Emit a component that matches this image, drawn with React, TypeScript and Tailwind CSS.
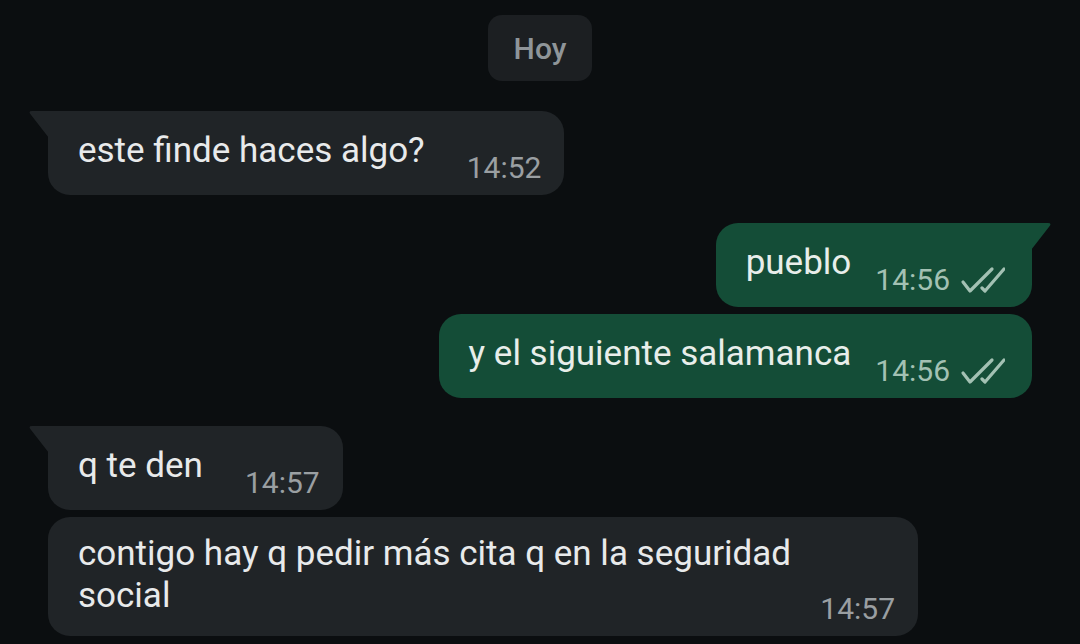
import React from "react"

const font = { fontFamily: "Roboto, 'Noto Sans', sans-serif" }

function InTail() {
  return (
    <svg className="absolute left-[-20px] top-0" width="20" height="27" viewBox="0 0 20 27">
      <path d="M21 0 H4 Q0 0 2.5 3.2 L21 27 Z" fill="#202427" />
    </svg>
  )
}

function OutTail() {
  return (
    <svg className="absolute right-[-20px] top-0" width="20" height="27" viewBox="0 0 20 27">
      <path d="M-1 0 H16 Q20 0 17.5 3.2 L-1 27 Z" fill="#144d37" />
    </svg>
  )
}

function Ticks() {
  return (
    <svg width="46" height="32" viewBox="0 0 46 32" fill="none" stroke="#a3c1b3" strokeWidth="3.2" strokeLinecap="round" strokeLinejoin="round">
      <path d="M4 18 L11 27 L33 5" />
      <path d="M23 24 L26 27 L45 5" />
    </svg>
  )
}

function Incoming({ text, time, tail }: { text: string; time: string; tail?: boolean }) {
  return (
    <div className="flex pl-[48px]">
      <div className={`relative flex items-end bg-[#202427] rounded-[22px] pl-[30px] pr-[23px] pt-[19px] pb-[10px] ${tail ? "rounded-tl-none" : ""}`}>
        {tail && <InTail />}
        <span className="text-[35px] leading-[42px] text-[#e8eaeb] mb-[13px] mr-[42px]">{text}</span>
        <span className="text-[30px] leading-[35px] text-[#9a9fa2]">{time}</span>
      </div>
    </div>
  )
}

function Outgoing({ text, time, tail }: { text: string; time: string; tail?: boolean }) {
  return (
    <div className="flex justify-end pr-[48px]">
      <div className={`relative flex items-end bg-[#144d37] rounded-[22px] pl-[30px] pr-[27px] pt-[19px] pb-[10px] ${tail ? "rounded-tr-none" : ""}`}>
        {tail && <OutTail />}
        <span className="text-[35px] leading-[42px] text-[#e8eeea] mb-[13px] mr-[24px]">{text}</span>
        <span className="flex items-center gap-[9px]">
          <span className="text-[30px] leading-[35px] text-[#a3c1b3]">{time}</span>
          <Ticks />
        </span>
      </div>
    </div>
  )
}

export default function App() {
  return (
    <div className="w-[1080px] h-[644px] bg-[#0b0e10] overflow-hidden flex flex-col" style={font}>
      <div className="flex justify-center pt-[15px]">
        <div className="bg-[#1c1f22] rounded-[14px] w-[104px] h-[66px] flex items-center justify-center text-[30px] font-medium text-[#8f9599]">
          Hoy
        </div>
      </div>

      <div className="mt-[30px]">
        <Incoming text="este finde haces algo?" time="14:52" tail />
      </div>

      <div className="mt-[28px] flex flex-col gap-[7px]">
        <Outgoing text="pueblo" time="14:56" tail />
        <Outgoing text="y el siguiente salamanca" time="14:56" />
      </div>

      <div className="mt-[28px] flex flex-col gap-[7px]">
        <Incoming text="q te den" time="14:57" tail />
        <div className="flex pl-[48px]">
          <div className="flex flex-col w-[870px] bg-[#202427] rounded-[22px] pl-[30px] pr-[23px] pt-[16px] pb-[10px]">
            <span className="text-[35px] leading-[42px] text-[#e8eaeb]">
              contigo hay q pedir más cita q en la seguridad
              <br />
              social
            </span>
            <span className="self-end mt-[-26px] text-[30px] leading-[35px] text-[#9a9fa2]">14:57</span>
          </div>
        </div>
      </div>
    </div>
  )
}
